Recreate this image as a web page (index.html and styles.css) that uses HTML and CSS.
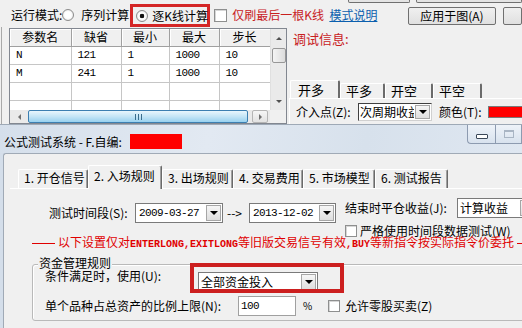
FILE: index.html
```html
<!DOCTYPE html>
<html lang="zh-CN">
  <head>
    <meta charset="UTF-8" />
    <title>公式测试系统</title>
    <link rel="stylesheet" href="styles.css">
  </head>
  <body>
    <!-- 后面的参数窗口 -->
    <div class="back">
      <div class="stubs">
        <span class="stub stub-a"></span>
        <span class="stub stub-b"></span>
      </div>
      <div class="mode-row">
        <span class="mode-label">运行模式:</span>
        <span class="radio"></span>
        <span class="mode-opt">序列计算</span>
        <span class="hl">
          <span class="radio on"></span>
          <span class="hl-text">逐K线计算</span>
        </span>
        <span class="check check-last"></span>
        <span class="red-text">仅刷最后一根K线</span>
        <a class="link" href="#">模式说明</a>
        <button class="btn btn-apply">应用于图(A)</button>
        <button class="btn btn-cut"></button>
      </div>
      <div class="back-main">
        <div class="grid">
          <div class="grid-top">
            <div class="params-wrap">
              <table class="params">
                <colgroup>
                  <col class="c1"><col class="c2"><col class="c3"><col class="c4"><col class="c5">
                </colgroup>
                <tr><th>参数名</th><th>缺省</th><th>最小</th><th>最大</th><th>步长</th></tr>
                <tr><td class="num">N</td><td class="num">121</td><td class="num">1</td><td class="num">1000</td><td class="num">10</td></tr>
                <tr><td class="num">M</td><td class="num">241</td><td class="num">1</td><td class="num">1000</td><td class="num">10</td></tr>
                <tr><td></td><td></td><td></td><td></td><td></td></tr>
                <tr><td></td><td></td><td></td><td></td><td></td></tr>
              </table>
            </div>
            <div class="vscroll">
              <span class="sb-arrow"><span class="tri-up"></span></span>
              <span class="thumb-v"></span>
              <span class="sb-space"></span>
              <span class="sb-arrow"><span class="tri-down"></span></span>
            </div>
          </div>
          <div class="grid-bottom">
            <div class="hscroll">
              <span class="sb-arrow-h"><span class="tri-left"></span></span>
              <span class="thumb-h"><span class="grip"></span></span>
              <span class="sb-btn-h"><span class="tri-right"></span></span>
            </div>
            <div class="corner"></div>
          </div>
        </div>
        <div class="debug">
          <div class="dbg-title">调试信息:</div>
          <div class="tabs-sm">
            <span class="tab-sm sel">开多</span>
            <span class="tab-sm">平多</span>
            <span class="tab-sm">开空</span>
            <span class="tab-sm">平空</span>
          </div>
          <div class="dbg-panel">
            <div class="dbg-row">
              <span class="lbl-entry">介入点(Z):</span>
              <span class="combo combo-entry">
                <span class="combo-text">次周期收益</span>
                <span class="combo-btn"><span class="tri-down dark"></span></span>
              </span>
              <span class="lbl-color">颜色(T):</span>
              <span class="swatch"></span>
            </div>
          </div>
        </div>
      </div>
    </div>

    <!-- 公式测试系统对话框 -->
    <div class="dlg">
      <div class="titlebar">
        <span class="title-text">公式测试系统 - F.自编:</span>
        <span class="redact"></span>
        <span class="wbtns">
          <span class="wbtn wbtn-min"><span class="glyph-min"></span></span>
          <span class="wbtn wbtn-max"><span class="glyph-max"></span></span>
        </span>
      </div>
      <div class="dlg-body">
        <div class="tabstrip">
          <span class="tab">1.&nbsp;开仓信号</span>
          <span class="tab sel">2.&nbsp;入场规则</span>
          <span class="tab">3.&nbsp;出场规则</span>
          <span class="tab">4.&nbsp;交易费用</span>
          <span class="tab">5.&nbsp;市场模型</span>
          <span class="tab">6.&nbsp;测试报告</span>
        </div>

        <div class="row-a">
          <div class="ra-left">
            <span class="lbl-period">测试时间段(S):</span>
            <span class="combo combo-date">
              <span class="combo-text num">2009-03-27</span>
              <span class="combo-btn"><span class="tri-down dark"></span></span>
            </span>
            <span class="to-arrow">--&gt;</span>
            <span class="combo combo-date2">
              <span class="combo-text num">2013-12-02</span>
              <span class="combo-btn"><span class="tri-down dark"></span></span>
            </span>
          </div>
          <div class="ra-right">
            <span class="lbl-close">结束时平仓收益(J):</span>
            <span class="combo combo-close">
              <span class="combo-text">计算收益</span>
              <span class="combo-btn"><span class="tri-down dark"></span></span>
            </span>
          </div>
        </div>

        <div class="row-chk">
          <span class="check"></span>
          <span class="chk-text">严格使用时间段数据测试(W)</span>
        </div>

        <div class="row-note">
          <span class="note-line"></span>
          <span class="note-text">以下设置仅对<span class="asc">ENTERLONG,EXITLONG</span>等旧版交易信号有效<span class="asc">,BUY</span>等新指令按实际指令价委托</span>
          <span class="note-line grow"></span>
        </div>

        <div class="group">
          <span class="group-title">资金管理规则</span>
          <div class="row-u">
            <span class="lbl-use">条件满足时，使用(U):</span>
            <span class="hl-wrap">
              <span class="combo combo-money">
                <span class="combo-text">全部资金投入</span>
                <span class="combo-btn"><span class="tri-down dark"></span></span>
              </span>
            </span>
          </div>
          <div class="row-n">
            <span class="lbl-limit">单个品种占总资产的比例上限(N):</span>
            <span class="input num">100</span>
            <span class="pct">%</span>
            <span class="check check-odd"></span>
            <span class="chk-text">允许零股买卖(Z)</span>
          </div>
        </div>
      </div>
    </div>
  </body>
</html>
```

FILE: styles.css
```css
* {
  box-sizing: border-box;
}

body {
  margin: 0;
  width: 522px;
  height: 328px;
  overflow: hidden;
  background: #f0f0f0;
  color: #000;
  font: 12px/14px "Noto Sans CJK SC", "Liberation Sans", sans-serif;
  white-space: nowrap;
}

.num {
  font-family: "Liberation Mono", "Noto Sans CJK SC", monospace;
  font-size: 11px;
  letter-spacing: -0.6px;
}

/* ---------- back window ---------- */
.back {
  height: 124px;
  overflow: hidden;
}

.stubs {
  display: flex;
  height: 3px;
}

.stub {
  height: 3px;
  border: 1px solid #707070;
  border-top: 0;
  border-radius: 0 0 2px 2px;
  background: #e4e4e4;
}

.stub-a {
  margin-left: 348px;
  width: 64px;
}

.stub-b {
  margin-left: 6px;
  width: 110px;
}

.mode-row {
  display: flex;
  align-items: center;
  height: 24px;
  padding-left: 11px;
}

.mode-label {
  width: 52px;
}

.radio {
  flex: none;
  width: 12px;
  height: 12px;
  border: 1px solid #8b8b8b;
  border-radius: 50%;
  background: radial-gradient(circle, #fff 45%, #d8d8d8 100%);
}

.radio.on {
  background: radial-gradient(circle, #111 2px, #fff 2.6px, #fff 45%, #d8d8d8 100%);
}

.mode-opt {
  margin-left: 7px;
  width: 51px;
}

.hl {
  display: flex;
  align-items: center;
  flex: none;
  width: 80px;
  height: 23px;
  margin-top: 1px;
  padding-left: 3px;
  border: 3px solid #d42626;
}

.hl-text {
  margin-left: 4px;
}

.check {
  flex: none;
  width: 13px;
  height: 13px;
  border: 1px solid #8e8f8f;
  background: #fff;
  box-shadow: inset 1px 1px #d6d6d6;
}

.check-last {
  margin-left: 4px;
}

.red-text {
  margin-left: 5px;
  width: 101px;
  color: #c8201e;
}

.link {
  width: 82px;
  color: #0b5fae;
  text-decoration: underline;
}

.btn {
  height: 18px;
  margin-top: 2px;
  padding: 0;
  border: 1px solid #707070;
  border-radius: 2px;
  background: linear-gradient(#f0f0f0, #e0e0e0);
  font: inherit;
  line-height: 16px;
  color: #000;
}

.btn-apply {
  width: 91px;
}

.btn-cut {
  margin-left: 7px;
  width: 20px;
}

.back-main {
  display: flex;
  height: 97px;
  margin-left: 1px;
  border-left: 1px solid #a9a9a9;
}

.grid {
  display: flex;
  flex-direction: column;
  flex: none;
  width: 278px;
  height: 96px;
  margin: 1px 0 0 7px;
  border: 1px solid #828790;
}

.grid-top {
  display: flex;
  height: 81px;
}

.params-wrap {
  width: 260px;
  height: 81px;
  overflow: hidden;
  background: #fff;
}

.params {
  width: 260px;
  border-collapse: collapse;
  table-layout: fixed;
}

.c1 { width: 61px; }
.c2 { width: 50px; }
.c3 { width: 48px; }
.c4 { width: 50px; }
.c5 { width: 51px; }

.params th {
  height: 17px;
  padding: 0;
  border-right: 1px solid #a0a0a0;
  border-bottom: 1px solid #a0a0a0;
  background: #f0f0f0;
  box-shadow: inset 1px 1px #fff;
  font-weight: normal;
  text-align: center;
}

.params td {
  height: 18px;
  padding: 0 0 0 6px;
  border-right: 1px solid #c6c6c6;
  border-bottom: 1px solid #c6c6c6;
}

.vscroll {
  display: flex;
  flex-direction: column;
  align-items: center;
  width: 16px;
  background: #eaeaea;
  border-left: 1px solid #e0e0e0;
}

.sb-arrow {
  display: flex;
  align-items: center;
  justify-content: center;
  height: 18px;
}

.sb-space {
  flex: 1;
}

.thumb-v {
  width: 14px;
  height: 15px;
  margin-top: 1px;
  border: 1px solid #979797;
  border-radius: 2px;
  background: linear-gradient(90deg, #f4f4f4, #dcdcdc);
}

.tri-up,
.tri-down {
  width: 0;
  height: 0;
  border-left: 3px solid transparent;
  border-right: 3px solid transparent;
}

.tri-up {
  border-bottom: 3px solid #505050;
}

.tri-down {
  border-top: 3px solid #505050;
}

.tri-down.dark {
  border-left-width: 4px;
  border-right-width: 4px;
  border-top: 4px solid #000;
}

.tri-left,
.tri-right {
  width: 0;
  height: 0;
  border-top: 3px solid transparent;
  border-bottom: 3px solid transparent;
}

.tri-left {
  border-right: 3px solid #707070;
}

.tri-right {
  border-left: 3px solid #707070;
}

.grid-bottom {
  display: flex;
  height: 13px;
}

.hscroll {
  display: flex;
  align-items: center;
  width: 260px;
  background: #eaeaea;
}

.sb-arrow-h {
  display: flex;
  align-items: center;
  justify-content: center;
  width: 18px;
}

.thumb-h {
  display: flex;
  align-items: center;
  justify-content: center;
  width: 220px;
  height: 13px;
  border: 1px solid #3c7fb1;
  border-radius: 2px;
  background: linear-gradient(#e8f6fd, #c4e5f6 50%, #98d1ef);
}

.grip {
  width: 7px;
  height: 6px;
  background: repeating-linear-gradient(90deg, #3a6d8c 0 1px, transparent 1px 3px);
}

.sb-btn-h {
  display: flex;
  align-items: center;
  justify-content: center;
  width: 16px;
  height: 13px;
  margin-left: 4px;
  border: 1px solid #b5b5b5;
  border-radius: 2px;
  background: linear-gradient(#f6f6f6, #e2e2e2);
}

.corner {
  width: 16px;
  background: #f0f0f0;
}

.debug {
  display: flex;
  flex-direction: column;
  flex: 1;
  margin-left: 2px;
}

.dbg-title {
  margin: 5px 0 0 4px;
  color: #c8201e;
  font-size: 13px;
}

.tabs-sm {
  display: flex;
  align-items: flex-end;
  height: 18px;
  margin-top: 34px;
}

.tab-sm {
  width: 45px;
  height: 15px;
  padding-left: 5px;
  border-top: 1px solid #fff;
  border-left: 1px solid #fff;
  border-right: 2px solid #6b6b6b;
  border-radius: 2px 2px 0 0;
  font-size: 13px;
  line-height: 14px;
}

.tab-sm.sel {
  width: 50px;
  height: 18px;
  margin-left: 1px;
  padding-left: 7px;
  line-height: 17px;
}

.tab-sm:nth-child(3) { width: 48px; }
.tab-sm:nth-child(4) { width: 49px; }

.dbg-panel {
  flex: 1;
  border-left: 1px solid #fff;
  border-top: 1px solid #fff;
}

.dbg-row {
  display: flex;
  align-items: center;
  height: 18px;
  margin-top: 4px;
  padding-left: 6px;
}

.lbl-entry {
  width: 62px;
}

.combo {
  display: flex;
  flex: none;
  height: 20px;
  border: 1px solid #7a7a7a;
  background: #fff;
}

.combo-text {
  flex: 1;
  overflow: hidden;
  padding-left: 2px;
  line-height: 18px;
}

.combo-btn {
  display: flex;
  align-items: center;
  justify-content: center;
  flex: none;
  width: 15px;
  margin: 1px;
  border: 1px solid #a6a6a6;
  background: linear-gradient(#f6f6f6, #dedede);
}

.combo-entry {
  width: 74px;
  height: 18px;
  border-color: #404040 #d0d0d0 #d0d0d0 #404040;
}

.combo-entry .combo-text {
  padding-left: 1px;
  line-height: 16px;
}

.lbl-color {
  margin-left: 7px;
  width: 49px;
}

.swatch {
  flex: none;
  width: 40px;
  height: 12px;
  border: 1px solid #7a7a7a;
  background: #f00;
}

/* ---------- dialog ---------- */
.dlg {
  display: flex;
  flex-direction: column;
  height: 204px;
  background: #d4deea;
}

.titlebar {
  display: flex;
  align-items: flex-start;
  flex: none;
  height: 29px;
  border-top: 1px solid #9ea9b6;
  background: linear-gradient(100deg, #d5dfeb, #e2e9f2 40%, #d7e1ec 70%, #dfe7f1);
}

.title-text {
  width: 126px;
  margin: 9px 0 0 4px;
  line-height: 16px;
}

.redact {
  width: 52px;
  height: 15px;
  margin-top: 9px;
  background: #f00;
}

.wbtns {
  display: flex;
  margin-left: auto;
}

.wbtn {
  display: flex;
  align-items: center;
  justify-content: center;
  height: 19px;
  border: 1px solid #8d9bb0;
  border-top: 0;
  background: linear-gradient(#eef3f9, #d8e2ee);
}

.wbtn-min {
  width: 28px;
  border-right: 0;
  border-bottom-left-radius: 4px;
}

.wbtn-max {
  width: 27px;
}

.glyph-min {
  width: 12px;
  height: 5px;
  margin-top: 5px;
  border: 1px solid #3b4859;
  border-radius: 1px;
  background: #fff;
}

.glyph-max {
  width: 10px;
  height: 8px;
  border: 1px solid #a9b5c4;
  border-top-width: 2px;
}

.dlg-body {
  flex: 1;
  margin-left: 3px;
  overflow: hidden;
  border-left: 1px solid #a0aab6;
  border-top: 1px solid #a0aab6;
  border-top-left-radius: 3px;
  background: #f0f0f0;
}

.tabstrip {
  display: flex;
  align-items: flex-end;
  height: 24px;
  margin: 11px 0 0 6px;
  padding-left: 8px;
  border-bottom: 1px solid #fff;
}

.tab {
  flex: none;
  width: 70px;
  height: 19px;
  padding: 1px 0 0 5px;
  border-top: 1px solid #fff;
  border-left: 1px solid #fff;
  border-right: 1px solid #6a6a6a;
  border-radius: 2px 2px 0 0;
  box-shadow: inset -1px 0 #a0a0a0;
}

.tab.sel {
  width: 74px;
  height: 24px;
  margin-bottom: -1px;
  padding-top: 3px;
  background: #f0f0f0;
}

.tab:nth-child(3) { width: 71px; }
.tab:nth-child(5) { width: 72px; }
.tab:nth-child(6) { width: 73px; }

.row-a {
  display: flex;
  align-items: flex-start;
  height: 26px;
  margin-top: 9px;
}

.ra-left,
.ra-right {
  display: flex;
  align-items: center;
  height: 20px;
}

.ra-left {
  margin-top: 5px;
}

.lbl-period {
  margin-left: 45px;
  width: 86px;
}

.combo-date {
  width: 88px;
}

.combo-date2 {
  width: 87px;
}

.combo-date .combo-text,
.combo-date2 .combo-text {
  padding-left: 3px;
}

.to-arrow {
  margin-left: 4px;
  width: 22px;
}

.lbl-close {
  margin-left: 9px;
  width: 112px;
}

.combo-close {
  width: 80px;
}

.row-chk {
  display: flex;
  align-items: center;
  height: 12px;
  margin: 1px 0 0 341px;
  line-height: 12px;
}

.row-chk .check {
  width: 12px;
  height: 12px;
}

.chk-text {
  margin-left: 3px;
}

.row-note {
  display: flex;
  align-items: center;
  height: 12px;
  margin-left: 28px;
  color: #e00000;
  line-height: 12px;
}

.note-line {
  flex: none;
  width: 23px;
  height: 1px;
  background: #e00000;
}

.note-line.grow {
  flex: 1;
}

.note-text {
  margin: 0 3px;
}

.asc {
  font-family: "Liberation Mono", monospace;
  font-size: 10px;
  font-weight: bold;
}

.group {
  display: flex;
  flex-direction: column;
  width: 520px;
  height: 57px;
  margin: 15px 0 0 28px;
  border: 1px solid #b9b9b9;
  border-radius: 3px;
  box-shadow: inset 1px 1px #fff;
}

.group-title {
  align-self: flex-start;
  margin: -8px 0 0 5px;
  padding: 0 1px;
  background: #f0f0f0;
  line-height: 12px;
}

.row-u {
  display: flex;
  align-items: flex-start;
  height: 23px;
  padding-left: 12px;
}

.lbl-use {
  width: 153px;
  margin-top: 1px;
  line-height: 12px;
}

.hl-wrap {
  position: relative;
  margin-top: 3px;
}

.hl-wrap::after {
  content: "";
  position: absolute;
  left: -8px;
  top: -9px;
  right: -26px;
  bottom: -1px;
  border: 4px solid #cc1f1f;
}

.combo-money {
  width: 120px;
}

.row-n {
  display: flex;
  align-items: center;
  height: 20px;
  margin-top: 4px;
  padding-left: 12px;
}

.lbl-limit {
  width: 193px;
}

.input {
  flex: none;
  width: 58px;
  height: 20px;
  padding-left: 2px;
  border: 1px solid #a0a0a0;
  background: #fff;
  line-height: 18px;
}

.pct {
  margin-left: 7px;
  width: 12px;
  font-size: 10px;
}

.check-odd {
  margin-left: 13px;
  width: 12px;
  height: 12px;
}

.row-n .chk-text {
  margin-left: 5px;
}
```
